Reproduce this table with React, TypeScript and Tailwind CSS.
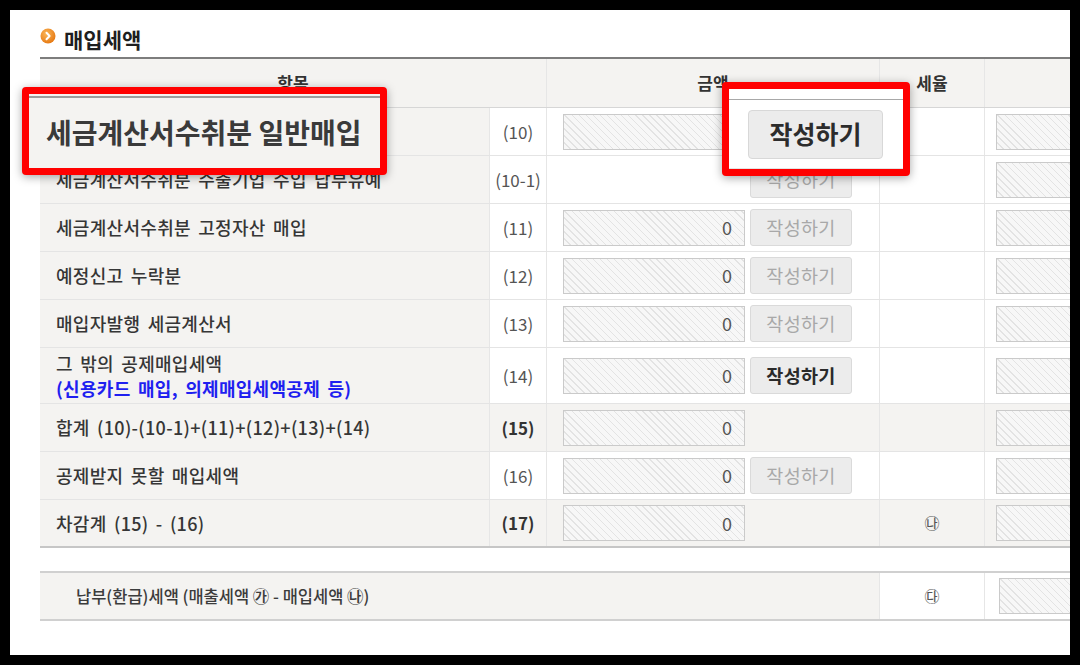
import React from 'react';

type Row = {
  label: React.ReactNode;
  no: string;
  input: boolean;
  button: 'on' | 'off' | null;
  total?: boolean;
  rate?: string;
  tall?: boolean;
};

const rows: Row[] = [
  { label: '세금계산서수취분 일반매입', no: '(10)', input: true, button: 'on' },
  { label: '세금계산서수취분 수출기업 수입 납부유예', no: '(10-1)', input: false, button: 'off' },
  { label: '세금계산서수취분 고정자산 매입', no: '(11)', input: true, button: 'off' },
  { label: '예정신고 누락분', no: '(12)', input: true, button: 'off' },
  { label: '매입자발행 세금계산서', no: '(13)', input: true, button: 'off' },
  {
    label: (
      <>
        <div>그 밖의 공제매입세액</div>
        <div className="font-bold text-[#1f1ff0]">(신용카드 매입, 의제매입세액공제 등)</div>
      </>
    ),
    no: '(14)',
    input: true,
    button: 'on',
    tall: true,
  },
  { label: '합계 (10)-(10-1)+(11)+(12)+(13)+(14)', no: '(15)', input: true, button: null, total: true },
  { label: '공제받지 못할 매입세액', no: '(16)', input: true, button: 'off' },
  { label: '차감계 (15) - (16)', no: '(17)', input: true, button: null, total: true, rate: '㉯' },
];

const hatch =
  'bg-[image:repeating-linear-gradient(45deg,#f7f7f7_0px,#f7f7f7_4px,#e3e3e3_4px,#e3e3e3_5px)]';

function Field({ value, className = '' }: { value?: string; className?: string }) {
  return (
    <div
      className={`h-[36px] border border-[#cacaca] ${hatch} flex items-center justify-end pr-[12px] text-[18px] text-[#555] ${className}`}
    >
      {value}
    </div>
  );
}

function WriteButton({ on }: { on: boolean }) {
  return (
    <div
      className={`w-[102px] h-[37px] rounded-[3px] border border-[#dadada] bg-[#ececec] flex items-center justify-center text-[18.5px] tracking-[0.3px] ${
        on ? 'text-[#2a2a2a] font-bold' : 'text-[#a8a8a8]'
      }`}
    >
      작성하기
    </div>
  );
}

function Bullet() {
  return (
    <svg width="16" height="16" viewBox="0 0 16 16" className="shrink-0">
      <defs>
        <radialGradient id="og" cx="40%" cy="35%" r="70%">
          <stop offset="0%" stopColor="#fbb75a" />
          <stop offset="100%" stopColor="#e5760f" />
        </radialGradient>
      </defs>
      <circle cx="8" cy="8" r="7.5" fill="url(#og)" />
      <path d="M6.5 4.8 L9.6 8 L6.5 11.2" fill="none" stroke="#fff" strokeWidth="2" strokeLinecap="round" strokeLinejoin="round" />
    </svg>
  );
}

export default function App() {
  return (
    <div className="w-[1080px] h-[665px] bg-black p-[10px] font-['Noto_Sans_CJK_KR','Liberation_Sans',sans-serif]">
      <div className="relative w-full h-full bg-white overflow-hidden pl-[30px]">
        {/* Title */}
        <div className="h-[47px] pt-[18px] flex items-start gap-[8px]">
          <Bullet />
          <span className="text-[21px] leading-[24px] font-bold text-[#1e1e1e] -mt-[1px]">매입세액</span>
        </div>

        {/* Main table */}
        <div className="w-[1060px] border-t-2 border-[#7d7d7d] text-[#333]">
          <div className="grid grid-cols-[507px_333px_105px_1fr] h-[49px] border-b border-[#d6d6d6] bg-[#f4f3f1] text-[17px] font-bold text-[#333]">
            <div className="flex items-center justify-center border-r border-[#e6e6e6]">항목</div>
            <div className="flex items-center justify-center border-r border-[#e6e6e6]">금액</div>
            <div className="flex items-center justify-center border-r border-[#e6e6e6]">세율</div>
            <div />
          </div>

          {rows.map((r, i) => {
            const last = i === rows.length - 1;
            return (
              <div
                key={r.no}
                className={`grid grid-cols-[450px_57px_333px_105px_1fr] ${r.tall ? 'h-[56px]' : 'h-[48px]'} ${
                  last ? 'border-b-2 border-[#c6c6c6]' : 'border-b border-[#e4e4e4]'
                } ${r.total ? 'bg-[#f4f3f1]' : 'bg-white'}`}
              >
                <div className="bg-[#f4f3f1] border-r border-[#e6e6e6] pl-[16px] flex flex-col justify-center text-[18px] leading-[25px] tracking-[0.3px] [word-spacing:3px] font-medium text-[#363636]">
                  {r.label}
                </div>
                <div
                  className={`border-r border-[#e6e6e6] flex items-center justify-center text-[17px] ${
                    r.total ? 'font-bold text-[#333]' : 'text-[#555]'
                  }`}
                >
                  {r.no}
                </div>
                <div className="border-r border-[#e6e6e6] flex items-center pl-[16px] gap-[5px]">
                  {r.input ? <Field value="0" className="w-[182px]" /> : <div className="w-[182px]" />}
                  {r.button && <WriteButton on={r.button === 'on'} />}
                </div>
                <div className="border-r border-[#e6e6e6] flex items-center justify-center text-[15px] text-[#555]">
                  {r.rate}
                </div>
                <div className="flex items-center pl-[11px] overflow-hidden">
                  <Field className="w-[160px] shrink-0" />
                </div>
              </div>
            );
          })}
        </div>

        {/* Payable tax table */}
        <div className="mt-[23px] w-[1060px] grid grid-cols-[840px_105px_1fr] h-[50px] border-t-2 border-b-2 border-[#d0d0d0]">
          <div className="bg-[#f4f3f1] border-r border-[#e6e6e6] pl-[36px] flex items-center text-[16.5px] font-medium text-[#3c3c3c]">
            납부(환급)세액 (매출세액 ㉮ - 매입세액 ㉯)
          </div>
          <div className="border-r border-[#e6e6e6] flex items-center justify-center text-[15px] text-[#555]">㉰</div>
          <div className="flex items-center pl-[14px] overflow-hidden">
            <Field className="w-[160px] shrink-0" />
          </div>
        </div>

        {/* Callout: label */}
        <div className="absolute left-[12px] top-[77px] w-[365px] h-[88px] border-[7px] border-[#ff0000] rounded-[4px] bg-[#f4f3f1] shadow-[0_2px_10px_rgba(0,0,0,0.35)]">
          <div className="h-full border-t-2 border-[#9c9c9c] mt-[2px] flex items-center pl-[17px] pb-[4px] text-[28px] font-bold text-[#3a3a3a]">
            세금계산서수취분 일반매입
          </div>
        </div>

        {/* Callout: button */}
        <div className="absolute left-[712px] top-[72px] w-[188px] h-[94px] border-[7px] border-[#ff0000] rounded-[4px] bg-white shadow-[0_2px_10px_rgba(0,0,0,0.35)]">
          <div className="mt-[10px] h-[70px] border-t border-b border-t-[#a8a8a8] border-b-[#e4e4e4] flex items-center pl-[19px]">
            <div className="w-[135px] h-[49px] rounded-[4px] border border-[#d8d8d8] bg-[#ececec] flex items-center justify-center text-[25px] font-bold text-[#2c2c2c]">
              작성하기
            </div>
          </div>
        </div>
      </div>
    </div>
  );
}
